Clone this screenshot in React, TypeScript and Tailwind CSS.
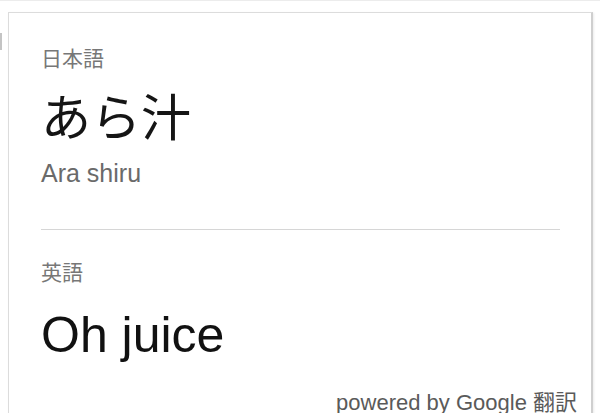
import React from "react";

export default function App() {
  return (
    <div className="w-[600px] h-[413px] overflow-hidden bg-white border-t border-[#ececec] flex">
      <div className="w-[2px] h-[17px] mt-[32px] bg-[#c4c4c4] shrink-0" />
      <div className="ml-[6px] mt-[11px] w-[585px] h-[460px] shrink-0 bg-white border border-[#dcdcdc] border-r-2 border-r-[#cfcfcf] shadow-[1px_1px_2px_rgba(0,0,0,0.08)] flex flex-col">
        <div className="pl-[32px] pr-[31px] pt-[34px] flex flex-col">
          <div className="font-['Noto_Sans_CJK_JP',sans-serif] text-[21px] leading-[21px] text-[#777777]">日本語</div>
          <div className="mt-[21px] font-['Noto_Sans_CJK_JP',sans-serif] text-[50px] leading-[50px] text-[#151515]">あら汁</div>
          <div className="mt-[22px] font-['Liberation_Sans',Arial,sans-serif] text-[25px] leading-[25px] text-[#6a6a6a]">Ara shiru</div>
          <div className="mt-[43px] h-[1px] bg-[#d6d6d6]" />
          <div className="mt-[31px] font-['Noto_Sans_CJK_JP',sans-serif] text-[21px] leading-[21px] text-[#777777]">英語</div>
          <div className="mt-[28px] font-['Liberation_Sans',Arial,sans-serif] text-[50px] leading-[50px] text-[#111111]">Oh juice</div>
        </div>
        <div className="mt-[32px] pr-[14px] text-right font-['Liberation_Sans',Arial,'Noto_Sans_CJK_JP',sans-serif] text-[22px] leading-[22px] text-[#5a5a5a]">
          powered by Google 翻訳
        </div>
      </div>
    </div>
  );
}
